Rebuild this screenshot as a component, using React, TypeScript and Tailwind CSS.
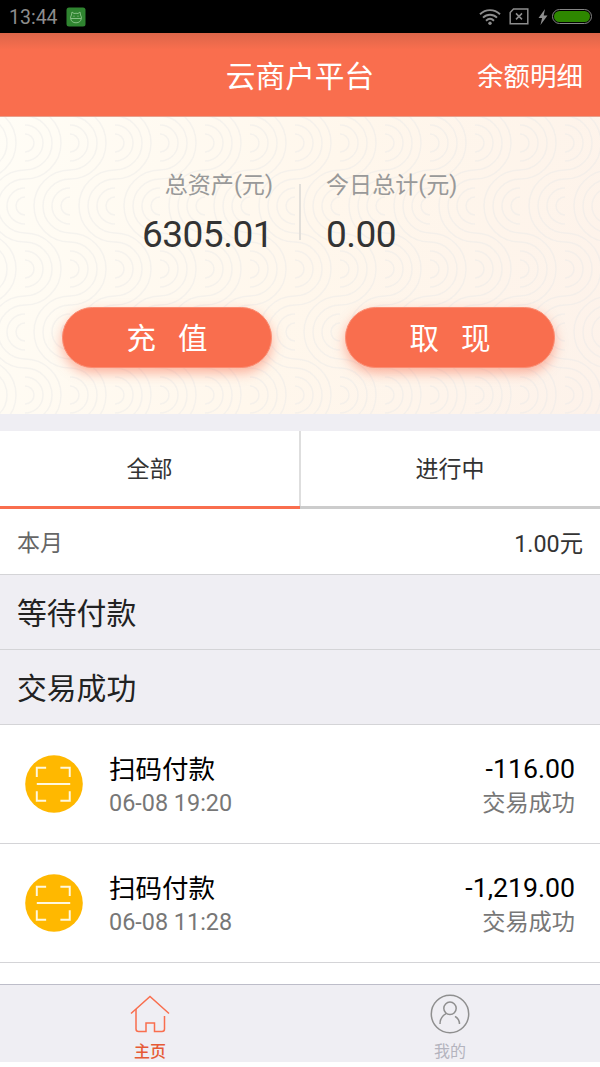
import type { ReactNode } from 'react';

interface Transaction {
  title: string;
  time: string;
  amount: string;
  status: string;
}

const transactions: Transaction[] = [
  { title: '扫码付款', time: '06-08 19:20', amount: '-116.00', status: '交易成功' },
  { title: '扫码付款', time: '06-08 11:28', amount: '-1,219.00', status: '交易成功' },
];

export default function App() {
  return (
    <div className="flex h-[1067px] w-[600px] flex-col overflow-hidden bg-white font-[Roboto,'Noto_Sans_CJK_SC',sans-serif] whitespace-nowrap text-[#333]">
      <StatusBar />
      <header className="grid h-[84px] shrink-0 grid-cols-[1fr_auto_1fr] items-center border-b border-[#e9a08c] bg-[#f96e4e] bg-linear-to-b from-[#dc6549] to-[#f96e4e] to-20% px-[17px] pt-[5px] text-white">
        <h1 className="col-start-2 text-[29.7px] leading-none">云商户平台</h1>
        <span className="pt-px text-right text-[26.5px] leading-none">余额明细</span>
      </header>
      <Balance />
      <nav className="grid h-[78px] shrink-0 grid-cols-2 text-[23px]">
        <div className="flex items-center justify-center border-b-[3px] border-[#f96e4e] pt-[4px] pr-px">全部</div>
        <div className="flex flex-col border-b-[3px] border-[#ccc]">
          <div className="-ml-px flex flex-1 items-center justify-center border-l-2 border-[#dedede] pt-[4px] pr-px">进行中</div>
        </div>
      </nav>
      <div className="flex h-[66px] shrink-0 items-center justify-between border-b border-[#d4d4d7] px-[17px] pt-[5px] text-[23px]">
        <span className="text-[#666]">本月</span>
        <span className="text-[23.3px]">1.00元</span>
      </div>
      <SectionTitle>等待付款</SectionTitle>
      <SectionTitle>交易成功</SectionTitle>
      <ul className="flex-1">
        {transactions.map((item) => (
          <TransactionRow key={item.time} {...item} />
        ))}
      </ul>
      <footer className="mb-[5px] grid h-[78px] shrink-0 grid-cols-2 border-t border-[#bdbdc9] bg-[#efeef3] text-[16px]">
        <div className="flex flex-col items-center gap-[9px] pt-[9px] text-[#e65a35]">
          <HomeIcon />
          <span className="leading-[18px] font-medium">主页</span>
        </div>
        <div className="flex flex-col items-center gap-[9px] pt-[9px] text-[#b4b4be]">
          <UserIcon />
          <span className="leading-[18px]">我的</span>
        </div>
      </footer>
    </div>
  );
}

const StatusBar = () => (
  <div className="flex h-[33px] shrink-0 items-center bg-black pr-[8px] pl-[9px] text-[#8d8d8d]">
    <span className="w-[57px] pt-[2px] text-[19.5px] leading-none">13:44</span>
    <svg width="20" height="20" viewBox="0 0 20 20" fill="none" stroke="#8fc48c" strokeWidth="0.9">
      <rect x="0.5" y="0.5" width="19" height="19" rx="2.5" fill="#2f8430" stroke="none" />
      <path d="M5.3 8.6 6 5l2 1.5q2-.5 4 0L14 5l.7 3.6" />
      <path d="M5.3 8.4c-.7 1-.8 1.8-.7 2.8.3 3 2.4 4.6 5.4 4.6s5.1-1.6 5.4-4.6c.1-1 0-1.8-.7-2.8M4.7 11.5h10.6" />
      <path d="M8 8.6v1.2M12 8.6v1.2" />
    </svg>
    <div className="ml-auto flex items-center">
      <svg width="22" height="18" viewBox="0 0 22 18" fill="none" stroke="currentColor" strokeWidth="1.9">
        <path d="M1 6.3c5.7-5.6 14.3-5.6 20 0M4 9.6c4-3.9 10-3.9 14 0M7 12.7c2.4-2.3 5.6-2.3 8 0" />
        <circle cx="11" cy="15.3" r="1.7" fill="currentColor" stroke="none" />
      </svg>
      <svg className="ml-[8px]" width="20" height="17" viewBox="0 0 20 17" fill="none" stroke="currentColor" strokeWidth="1.5">
        <path d="M4.5 1H18.8V15.8H1.2V4.5zM7 5.4l6 6M13 5.4l-6 6" />
      </svg>
      <svg className="ml-[9px]" width="10" height="16" viewBox="0 0 9 16" fill="currentColor">
        <path d="M6.5 0 0 9h3.6L2 16 9 6.5H5.2z" />
      </svg>
      <div className="ml-[4px] h-[15px] w-[40px] rounded-full border border-[#858585] p-px">
        <div className="h-full rounded-full bg-[#2e8700]" />
      </div>
    </div>
  </div>
);

const Balance = () => (
  <section className="relative isolate flex h-[314px] shrink-0 flex-col border-b-[17px] border-[#efeef3] bg-[linear-gradient(110deg,#fffdf6_0%,#fff7ec_50%,#fdf2ea_100%)]">
    <WavePattern />
    <div className="flex h-[190px] pt-[67px]">
      <div className="flex h-[56px] w-[301px] flex-col items-end border-r-2 border-[#e2dfda] pr-[26px]">
        <Figure label="总资产(元)" value="6305.01" />
      </div>
      <div className="flex flex-col pl-[25px]">
        <Figure label="今日总计(元)" value="0.00" />
      </div>
    </div>
    <div className="flex justify-between pr-[45px] pl-[62px]">
      <ActionButton>充&nbsp;&nbsp;&nbsp;值</ActionButton>
      <ActionButton>取&nbsp;&nbsp;&nbsp;现</ActionButton>
    </div>
  </section>
);

const Figure = ({ label, value }: { label: string; value: string }) => (
  <>
    <span className="-mt-[10px] text-[23.1px] leading-[24px] text-[#999]">{label}</span>
    <span className="mt-[15px] text-[37px] leading-[44px] tracking-[-0.5px]">{value}</span>
  </>
);

const ActionButton = ({ children }: { children: ReactNode }) => (
  <button className="h-[61px] w-[210px] rounded-full border border-[#fb8c72] bg-[#f96e4e] pt-[5px] text-[29.5px] leading-none text-white shadow-[0_5px_12px_rgba(249,110,78,0.5)]">
    {children}
  </button>
);

// Interlocking half rings, opening left on one line and right on the next
const WavePattern = () => (
  <svg className="absolute inset-0 -z-10" width="600" height="297">
    <defs>
      <pattern id="waves" x="25" y="26" width="45" height="126" patternUnits="userSpaceOnUse">
        <g fill="none" stroke="#e6e6e8" strokeOpacity="0.42" strokeWidth="1.5">
          {[-126, 0, 126].map((y) =>
            [9, 18, 27, 36].map((r) => (
              <g key={`${y}-${r}`}>
                <path d={`M0 ${y - r}a${r} ${r} 0 0 1 0 ${r * 2}`} />
                <path d={`M45 ${y + 63 - r}a${r} ${r} 0 0 0 0 ${r * 2}`} />
              </g>
            )),
          )}
        </g>
      </pattern>
    </defs>
    <rect width="600" height="297" fill="url(#waves)" />
  </svg>
);

const SectionTitle = ({ children }: { children: ReactNode }) => (
  <h2 className="flex h-[75px] shrink-0 items-center border-b border-[#d4d4d7] bg-[#efeef3] px-[17px] pt-[5px] text-[29.8px] text-[#222]">
    {children}
  </h2>
);

const TransactionRow = ({ title, time, amount, status }: Transaction) => (
  <li className="flex h-[119px] items-center border-b border-[#d4d4d7] px-[25px]">
    <ScanIcon />
    <div className="ml-[26px] flex flex-1 flex-col pt-[4px]">
      <span className="text-[26.5px] leading-[35px] text-black">{title}</span>
      <span className="text-[23.4px] leading-[33px] text-[#777]">{time}</span>
    </div>
    <div className="flex flex-col pt-[4px] text-right">
      <span className="text-[26.7px] leading-[35px] text-black">{amount}</span>
      <span className="text-[23.2px] leading-[33px] text-[#777]">{status}</span>
    </div>
  </li>
);

const ScanIcon = () => (
  <svg className="-mt-px" width="58" height="58" viewBox="0 0 59 59" fill="none" stroke="#fff8df" strokeWidth="2">
    <circle cx="29.5" cy="29.5" r="29.3" fill="#ffb800" stroke="none" />
    <path d="M12 22.5V13h9.5M36 13h9.5v9.5M45.5 37v9.5H36M21.5 46.5H12V37M12 29.5h34" />
  </svg>
);

const HomeIcon = () => (
  <svg width="40" height="40" viewBox="0 0 40 40" fill="none" stroke="#f96e4e" strokeWidth="1.5">
    <path d="M1 19.5 20 2.5l19 17" />
    <path d="M6 15v20q0 2.5 2.5 2.5H16V29h8.5v8.5H32q2.5 0 2.5-2.5V22" />
  </svg>
);

const UserIcon = () => (
  <svg width="40" height="40" viewBox="0 0 40 40" fill="none" stroke="#8f8f8f" strokeWidth="1.5">
    <circle cx="20" cy="20" r="18.7" />
    <circle cx="20" cy="14.3" r="6.2" />
    <path d="M10 30c0-4.7 2.2-8.5 6.4-10.7M25 22.3c2.9 1.8 4.5 4.3 4.5 7.7" />
  </svg>
);
